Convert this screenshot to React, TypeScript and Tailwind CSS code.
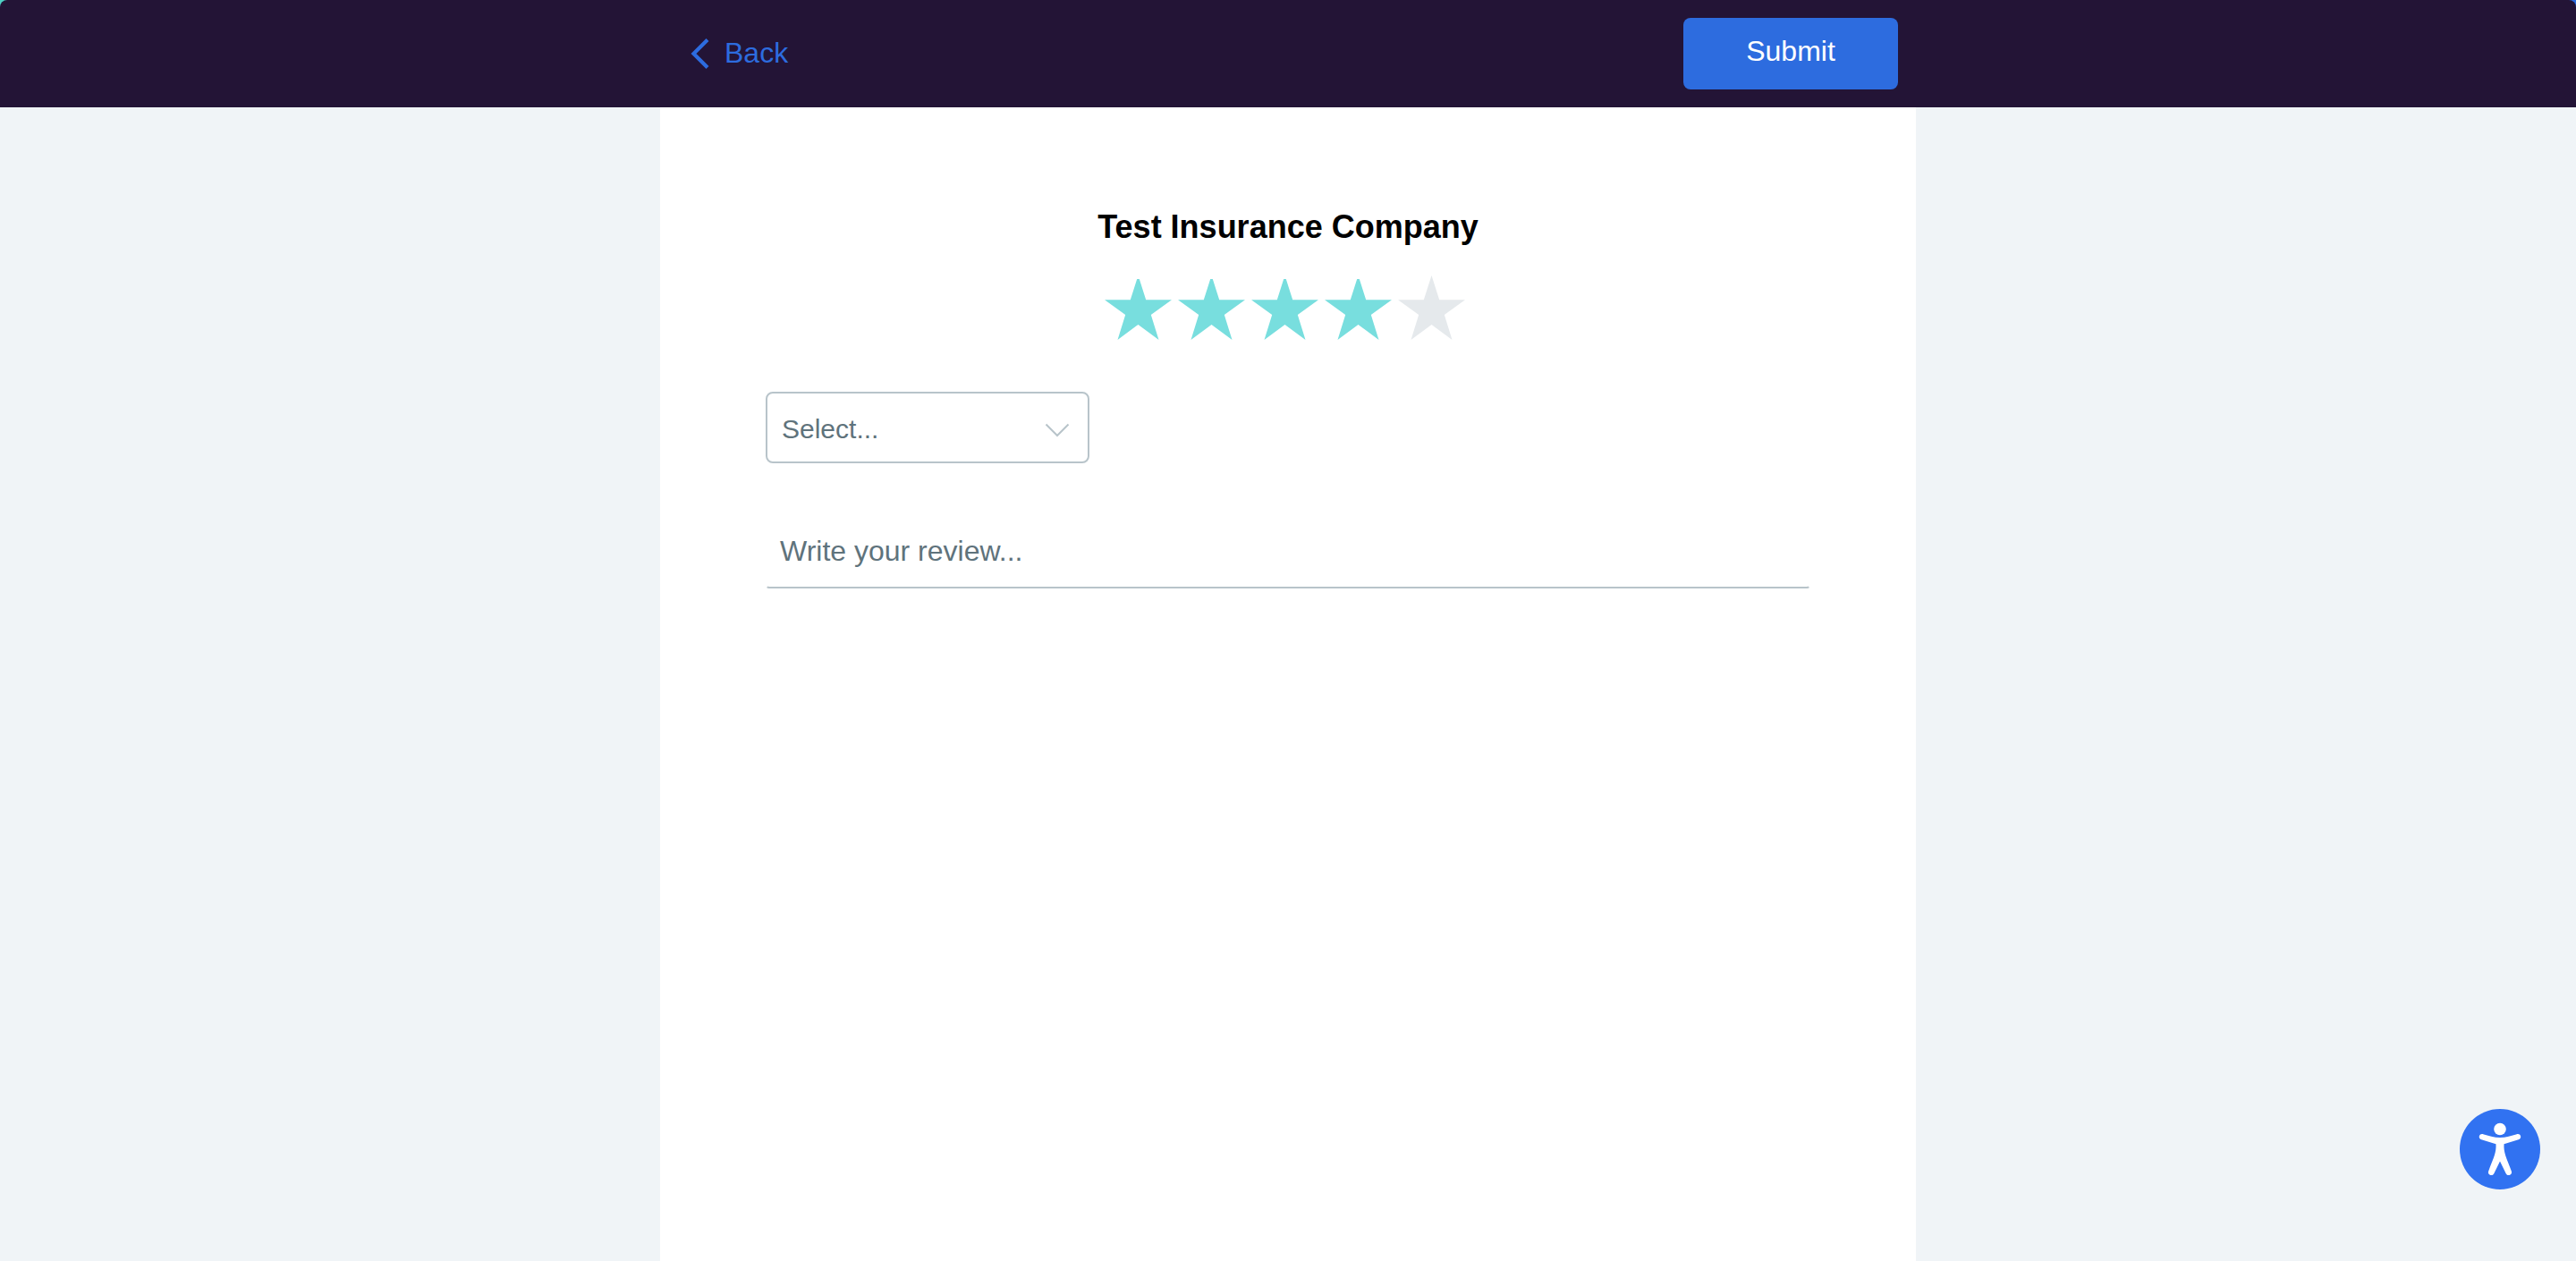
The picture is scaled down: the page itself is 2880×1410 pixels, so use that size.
import { useState } from "react";

const STAR = "M37.5 0 L46.2 27.3 L75 27.3 L51.8 44 L60.5 72 L37.5 55 L14.5 72 L23.2 44 L0 27.3 L28.8 27.3 Z";
const STAR_FILLED =
  "M36.2 4 L38.8 4 L46.2 27.3 L75 27.3 L51.8 44 L60.5 72 L37.5 55 L14.5 72 L23.2 44 L0 27.3 L28.8 27.3 Z";

function Header() {
  return (
    <div className="bg-linear-to-r from-[#4fd1c5] to-[#2b6be0]">
      <header className="rounded-t-lg bg-[#231436]">
        <div className="mx-auto flex h-[120px] w-full max-w-[1404px] items-center justify-between pr-5 pl-8">
          <a href="#back" className="flex items-center gap-4 text-[32px] leading-10 text-[#2d6cdf]">
            <svg className="h-9 w-6" viewBox="0 0 24 36" fill="none" aria-hidden="true">
              <path d="M21 2.5 L5.5 18 L21 33.5" stroke="currentColor" strokeWidth="4.2" />
            </svg>
            <span className="pb-0.5">Back</span>
          </a>
          <button
            type="submit"
            form="review"
            className="h-20 w-60 rounded-lg bg-[#2d6cdf] pb-1.5 text-[32px] leading-10 text-white"
          >
            Submit
          </button>
        </div>
      </header>
    </div>
  );
}

function Rating() {
  const [rating, setRating] = useState(4);
  return (
    <div role="radiogroup" aria-label="Rating" className="mt-8 flex">
      {[1, 2, 3, 4, 5].map((value) => (
        <label key={value} className="relative block w-[82px] cursor-pointer">
          <input
            type="radio"
            name="rating"
            value={value}
            aria-label={`${value} stars`}
            checked={rating === value}
            onChange={() => setRating(value)}
            className="absolute inset-0 opacity-0"
          />
          <svg className="h-[72px] w-[75px]" viewBox="0 0 75 72" aria-hidden="true">
            <path
              d={value <= rating ? STAR_FILLED : STAR}
              className={value <= rating ? "fill-[#78dede]" : "fill-[#e5e9ec]"}
            />
          </svg>
        </label>
      ))}
    </div>
  );
}

export default function App() {
  return (
    <div className="flex min-h-screen flex-col bg-[#f0f4f7] font-['Liberation_Sans',Arial,sans-serif]">
      <Header />
      <main className="mx-auto w-full max-w-[1404px] grow bg-white px-[118px] pt-[112px]">
        <form id="review" className="flex flex-col items-center" onSubmit={(e) => e.preventDefault()}>
          <h1 className="text-center text-4xl leading-[44px] font-bold text-black">Test Insurance Company</h1>
          <Rating />
          <div className="relative mt-[58px] w-[362px] self-start">
            <select
              aria-label="Insurance policy"
              defaultValue=""
              className="h-20 w-full appearance-none rounded-lg border-2 border-[#b8c4ca] bg-white px-4 pt-1 text-[30px] leading-9 text-[#5f737c]"
            >
              <option value="">Select...</option>
            </select>
            <svg
              className="pointer-events-none absolute top-8 right-5 h-5 w-8"
              viewBox="0 0 32 20"
              fill="none"
              aria-hidden="true"
            >
              <path d="M3.5 4.5 L16 17 L28.5 4.5" stroke="#b8c4ca" strokeWidth="2" />
            </svg>
          </div>
          <textarea
            aria-label="Review"
            placeholder="Write your review..."
            rows={1}
            className="mt-[60px] h-20 w-full resize-none overflow-hidden rounded-sm border-2 border-transparent border-b-[#b8c4ca] bg-white px-[14px] py-4 text-[32px] leading-10 text-[#5f737c] placeholder:text-[#5f737c]"
          />
        </form>
      </main>
      <button
        type="button"
        aria-label="Accessibility options"
        className="fixed right-10 bottom-20 size-[90px] rounded-full bg-[#3172f1]"
      >
        <svg className="size-full" viewBox="0 0 90 90" fill="#fff" aria-hidden="true">
          <circle cx="45" cy="22.5" r="6.8" />
          <path d="M26.2 28.2 C32 29.8 38.5 32 45 32 C51.5 32 58 29.8 63.8 28.2 C68.5 27 70 33 65.7 34.3 L49.5 39.3 C49 49 52 54 57.8 69.5 C59.5 73.5 53.6 76 51.7 72.2 L45 58.5 L38.3 72.2 C36.4 76 30.5 73.5 32.2 69.5 C38 54 41 49 40.5 39.3 L24.3 34.3 C20 33 21.500 27 26.2 28.2 Z" />
        </svg>
      </button>
    </div>
  );
}
